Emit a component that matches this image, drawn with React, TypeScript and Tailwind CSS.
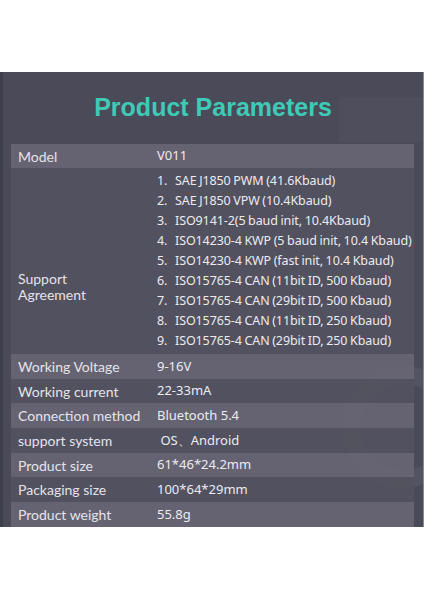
import React from 'react';

const rows: { label: string; value: string }[] = [
  { label: 'Working Voltage', value: '9-16V' },
  { label: 'Working current', value: '22-33mA' },
  { label: 'Connection method', value: 'Bluetooth 5.4' },
  { label: 'support system', value: ' OS、Android' },
  { label: 'Product size', value: '61*46*24.2mm' },
  { label: 'Packaging size', value: '100*64*29mm' },
  { label: 'Product weight', value: '55.8g' },
];

const protocols = [
  'SAE J1850 PWM (41.6Kbaud)',
  'SAE J1850 VPW (10.4Kbaud)',
  'ISO9141-2(5 baud init, 10.4Kbaud)',
  'ISO14230-4 KWP (5 baud init, 10.4 Kbaud)',
  'ISO14230-4 KWP (fast init, 10.4 Kbaud)',
  'ISO15765-4 CAN (11bit ID, 500 Kbaud)',
  'ISO15765-4 CAN (29bit ID, 500 Kbaud)',
  'ISO15765-4 CAN (11bit ID, 250 Kbaud)',
  'ISO15765-4 CAN (29bit ID, 250 Kbaud)',
];

const labelFont = "font-['Lato','Noto_Sans',sans-serif] text-[14px] text-[#e4e3ea]";
const valueFont = "font-['Noto_Sans','Open_Sans',sans-serif] text-[13px] text-[#ecebf0]";
const listFont = "font-['Noto_Sans','Open_Sans',sans-serif] text-[12.5px] tracking-[-0.1px] [word-spacing:-0.5px] text-[#ecebf0]";

export default function App() {
  return (
    <div className="w-[424px] h-[600px] bg-white flex flex-col">
      <div className="h-[72px]" />
      <div className="relative h-[455px] bg-[#4b4a59] border-l-[3px] border-l-[#3e3d4b] border-r border-r-[#8a8995] overflow-hidden">
        {/* faint watermark ring */}
        <svg className="absolute left-[330px] top-[285px]" width="140" height="140" viewBox="0 0 140 140">
          <circle cx="70" cy="70" r="52" fill="none" stroke="#ffffff" strokeOpacity="0.05" strokeWidth="18" />
        </svg>
        <div className="absolute left-[336px] top-[25px] w-[90px] h-[45px] bg-white/[0.025]" />

        <div className="relative flex flex-col">
          <div className="h-[72px] flex items-center justify-center">
            <h1 className="font-['Liberation_Sans',Arial,sans-serif] font-bold text-[25px] text-[#3ecab6]">
              Product Parameters
            </h1>
          </div>

          <div className="ml-[8px] w-[403px] flex flex-col">
            <div className="h-[24px] bg-[#686674]/90 flex items-center">
              <div className={`w-[146px] shrink-0 pl-[7px] ${labelFont}`}>Model</div>
              <div className={valueFont}>V011</div>
            </div>

            <div className="h-[186px] bg-[#53525f]/90 flex">
              <div className={`w-[146px] shrink-0 pl-[7px] pt-[103px] leading-[16px] ${labelFont}`}>
                Support
                <br />
                Agreement
              </div>
              <ol className="flex flex-col justify-center">
                {protocols.map((p, i) => (
                  <li key={p} className={`flex h-[20px] items-center ${listFont}`}>
                    <span className="w-[18px] shrink-0">{i + 1}.</span>
                    <span className="whitespace-nowrap">{p}</span>
                  </li>
                ))}
              </ol>
            </div>

            {rows.map((r, i) => (
              <div
                key={r.label}
                className={`h-[24.7px] flex items-center ${i % 2 === 0 ? 'bg-[#686674]/90' : 'bg-[#53525f]/90'}`}
              >
                <div className={`w-[146px] shrink-0 pl-[7px] whitespace-nowrap ${labelFont}`}>{r.label}</div>
                <div className={`whitespace-pre ${valueFont}`}>{r.value}</div>
              </div>
            ))}
          </div>
        </div>
      </div>
    </div>
  );
}
